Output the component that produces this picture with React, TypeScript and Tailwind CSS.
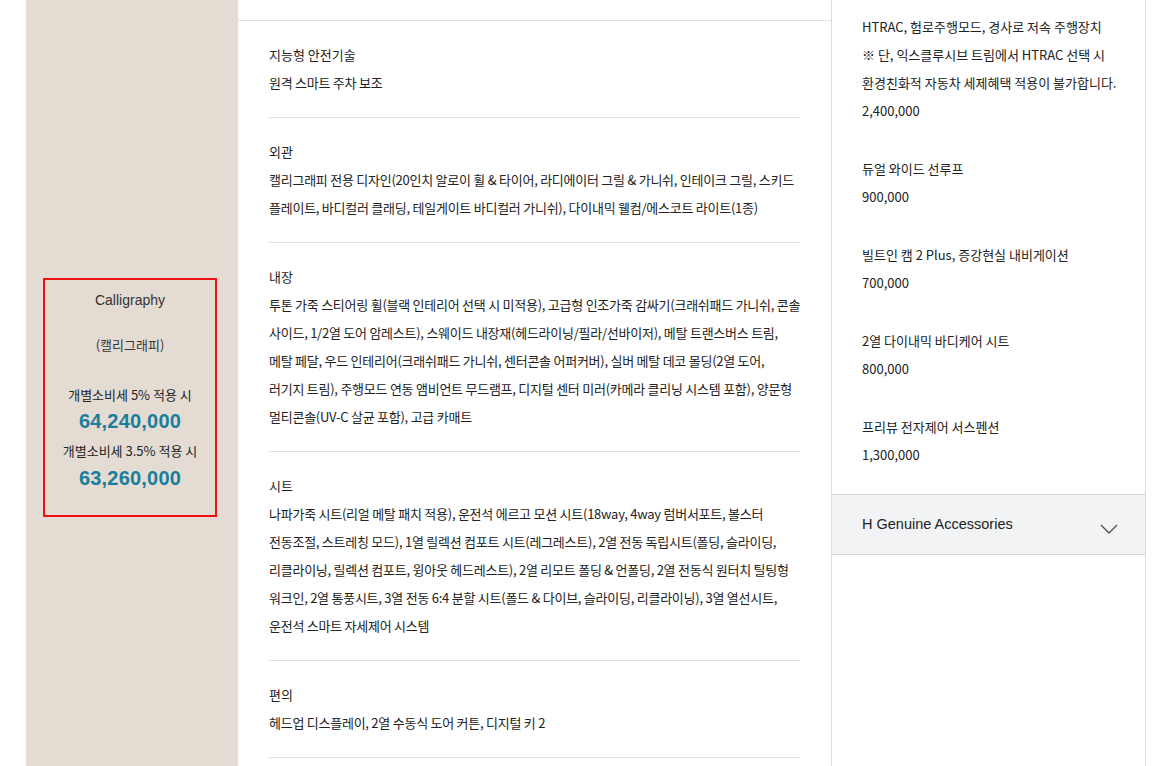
import React from 'react';

const specs = [
  { title: '지능형 안전기술', lines: ['원격 스마트 주차 보조'] },
  {
    title: '외관',
    lines: [
      '캘리그래피 전용 디자인(20인치 알로이 휠 & 타이어, 라디에이터 그릴 & 가니쉬, 인테이크 그릴, 스키드',
      '플레이트, 바디컬러 클래딩, 테일게이트 바디컬러 가니쉬), 다이내믹 웰컴/에스코트 라이트(1종)',
    ],
  },
  {
    title: '내장',
    lines: [
      '투톤 가죽 스티어링 휠(블랙 인테리어 선택 시 미적용), 고급형 인조가죽 감싸기(크래쉬패드 가니쉬, 콘솔',
      '사이드, 1/2열 도어 암레스트), 스웨이드 내장재(헤드라이닝/필라/선바이저), 메탈 트랜스버스 트림,',
      '메탈 페달, 우드 인테리어(크래쉬패드 가니쉬, 센터콘솔 어퍼커버), 실버 메탈 데코 몰딩(2열 도어,',
      '러기지 트림), 주행모드 연동 앰비언트 무드램프, 디지털 센터 미러(카메라 클리닝 시스템 포함), 양문형',
      '멀티콘솔(UV-C 살균 포함), 고급 카매트',
    ],
  },
  {
    title: '시트',
    lines: [
      '나파가죽 시트(리얼 메탈 패치 적용), 운전석 에르고 모션 시트(18way, 4way 럼버서포트, 볼스터',
      '전동조절, 스트레칭 모드), 1열 릴렉션 컴포트 시트(레그레스트), 2열 전동 독립시트(폴딩, 슬라이딩,',
      '리클라이닝, 릴렉션 컴포트, 윙아웃 헤드레스트), 2열 리모트 폴딩 & 언폴딩, 2열 전동식 원터치 틸팅형',
      '워크인, 2열 통풍시트, 3열 전동 6:4 분할 시트(폴드 & 다이브, 슬라이딩, 리클라이닝), 3열 열선시트,',
      '운전석 스마트 자세제어 시스템',
    ],
  },
  { title: '편의', lines: ['헤드업 디스플레이, 2열 수동식 도어 커튼, 디지털 키 2'] },
];

const options = [
  {
    lines: [
      'HTRAC, 험로주행모드, 경사로 저속 주행장치',
      '※ 단, 익스클루시브 트림에서 HTRAC 선택 시',
      '환경친화적 자동차 세제혜택 적용이 불가합니다.',
    ],
    price: '2,400,000',
  },
  { lines: ['듀얼 와이드 선루프'], price: '900,000' },
  { lines: ['빌트인 캠 2 Plus, 증강현실 내비게이션'], price: '700,000' },
  { lines: ['2열 다이내믹 바디케어 시트'], price: '800,000' },
  { lines: ['프리뷰 전자제어 서스펜션'], price: '1,300,000' },
];

export default function App() {
  return (
    <div className="flex h-[766px] w-[1163px] overflow-hidden bg-white font-['Noto_Sans_CJK_KR',sans-serif] text-[13px] text-[#222]">
      <div className="w-[26px] shrink-0" />

      {/* Trim column */}
      <div className="w-[212px] shrink-0 bg-[#e4dcd3] pl-[17px] pt-[278px]">
        <div className="flex h-[239px] w-[174px] flex-col items-center border-2 border-[#ee1111] pt-[10px] text-center">
          <p className="font-['Liberation_Sans','Noto_Sans_CJK_KR',sans-serif] text-[14px] leading-[20px] text-[#333]">Calligraphy</p>
          <p className="mt-[25px] leading-[20px] text-[#333]">(캘리그래피)</p>
          <p className="mt-[30px] leading-[20px]">개별소비세 5% 적용 시</p>
          <p className="mt-[3px] font-['Liberation_Sans',sans-serif] text-[20px] font-bold leading-[26px] tracking-[0.2px] text-[#1b7e9c]">64,240,000</p>
          <p className="mt-[7px] leading-[20px]">개별소비세 3.5% 적용 시</p>
          <p className="mt-[4px] font-['Liberation_Sans',sans-serif] text-[20px] font-bold leading-[26px] tracking-[0.2px] text-[#1b7e9c]">63,260,000</p>
        </div>
      </div>

      {/* Spec column */}
      <div className="w-[593px] shrink-0 pt-[20px]">
        <div className="border-t border-[#e2e2e2] px-[31px]">
          {specs.map((s) => (
            <div key={s.title} className="border-b border-[#e2e2e2] pb-[20px] pt-[20px] leading-[28px]">
              <p>{s.title}</p>
              {s.lines.map((l) => (
                <p key={l} className="whitespace-nowrap tracking-[-0.25px]">{l}</p>
              ))}
            </div>
          ))}
        </div>
      </div>

      {/* Option column */}
      <div className="flex w-[315px] shrink-0 flex-col border-x border-[#dcdcdc]">
        <div className="flex flex-col gap-[30px] pb-[25px] pl-[30px] pt-[13px] leading-[28px]">
          {options.map((o) => (
            <div key={o.price}>
              {o.lines.map((l) => (
                <p key={l} className="whitespace-nowrap">{l}</p>
              ))}
              <p>{o.price}</p>
            </div>
          ))}
        </div>
        <div className="flex h-[61px] items-center justify-between border-y border-[#d4d4d4] bg-[#f1f3f4] pl-[30px] pr-[27px]">
          <span className="font-['Liberation_Sans','Noto_Sans_CJK_KR',sans-serif] text-[14.5px] text-[#222]">H Genuine Accessories</span>
          <svg width="18" height="10" viewBox="0 0 18 10" className="mt-[8px]" fill="none">
            <path d="M1 1l8 8 8-8" stroke="#555" strokeWidth="1.4" />
          </svg>
        </div>
      </div>
    </div>
  );
}
